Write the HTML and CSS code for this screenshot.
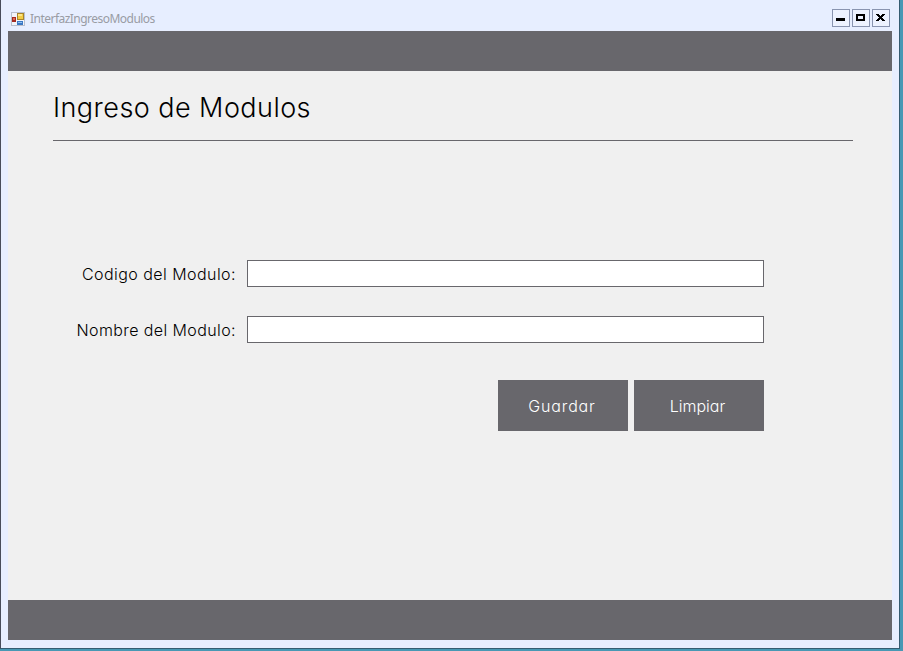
FILE: index.html
```html
<!DOCTYPE html>
<html lang="es">
<head>
<meta charset="utf-8">
<title>InterfazIngresoModulos</title>
<link rel="stylesheet" href="styles.css">
</head>
<body>
<div class="window">
  <header class="titlebar">
    <svg class="app-icon" width="14" height="14" viewBox="0 0 14 14" shape-rendering="crispEdges">
      <rect x=".5" y=".5" width="13" height="13" fill="#f2f4fa" stroke="#b9bfcd"/>
      <rect x="1" y="5" width="4" height="5" fill="#a52a22"/>
      <rect x="2" y="6" width="2" height="2" fill="#e06a50"/>
      <rect x="6" y="1" width="7" height="7" fill="#a8842a"/>
      <rect x="7" y="2" width="5" height="5" fill="#f3cd45"/>
      <rect x="7" y="2" width="4" height="2" fill="#fbe58a"/>
      <rect x="6" y="9" width="6" height="4" fill="#3b78c4"/>
      <rect x="7" y="10" width="4" height="1" fill="#8fc0f0"/>
    </svg>
    <span class="caption">InterfazIngresoModulos</span>
    <div class="controls">
      <button class="control" type="button" aria-label="Minimizar"><svg width="16" height="16" viewBox="0 0 16 16" shape-rendering="crispEdges"><path d="M3 8h9v3H3z"/></svg></button>
      <button class="control" type="button" aria-label="Maximizar"><svg width="16" height="16" viewBox="0 0 16 16" shape-rendering="crispEdges"><path fill-rule="evenodd" d="M3 4h9v7H3zM5 6v3h5V6z"/></svg></button>
      <button class="control" type="button" aria-label="Cerrar"><svg width="16" height="16" viewBox="0 0 16 16" shape-rendering="crispEdges"><path d="M3 4h3v1h1v1h1V5h1V4h3v1h-1v1h-1v1H9v1h1v1h1v1h1v1H9v-1H8V9H7v1H6v1H3v-1h1V9h1V8h1V7H5V6H4V5H3z"/></svg></button>
    </div>
  </header>
  <div class="form">
    <div class="band"></div>
    <main class="content">
      <h1 class="heading"><span>Ingreso de Modulos</span></h1>
      <div class="fields">
        <label class="label code" for="codigo">Codigo del Modulo:</label>
        <input class="input" id="codigo" type="text">
        <label class="label name" for="nombre">Nombre del Modulo:</label>
        <input class="input" id="nombre" type="text">
      </div>
      <div class="actions">
        <button class="action save" type="button">Guardar</button>
        <button class="action clear" type="button">Limpiar</button>
      </div>
    </main>
    <div class="band"></div>
  </div>
</div>
</body>
</html>
```
FILE: styles.css
```css
* { box-sizing: border-box; }
body {
  margin: 0;
  width: 903px;
  height: 651px;
  overflow: hidden;
  background: #4798b4;
}
.window {
  width: 900px;
  height: 649px;
  border: 1px solid #355c72;
  border-top: 0;
  border-left-color: #484c5a;
  padding: 0 7px 8px;
  background: #e7eeff;
}
.titlebar {
  display: flex;
  height: 31px;
  padding: 6px 2px 0 3px;
  align-items: center;
}
.caption {
  margin-left: 5px;
  font: 12px/16px "Noto Sans", "Open Sans", sans-serif;
  letter-spacing: -0.53px;
  color: #999ca4;
}
.controls { display: flex; gap: 2px; margin-left: auto; margin-top: -2px; }
.control {
  width: 18px;
  height: 18px;
  padding: 0;
  border: 1px solid #8994b0;
  background: #edf2ff;
}
.control svg { display: block; }
.form {
  display: flex;
  flex-direction: column;
  height: 609px;
  background: #f0f0f0;
}
.band { height: 40px; background: #68676c; }
.content {
  flex: 1;
  padding: 0 39px 0 45px;
  font-family: Inter, Lato, sans-serif;
  font-feature-settings: "cv11" 1;
}
.heading {
  height: 70px;
  margin: 0;
  padding-top: 19px;
  border-bottom: 1px solid #68676c;
  font-size: 27px;
  font-weight: 300;
  line-height: 36px;
  letter-spacing: 0.45px;
  color: #000;
}
.fields {
  display: grid;
  grid-template-columns: 183px 517px;
  grid-auto-rows: 27px;
  column-gap: 11px;
  row-gap: 29px;
  margin-top: 119px;
  align-items: center;
}
.label {
  justify-self: end;
  font-size: 16px;
  font-weight: 300;
  line-height: 24px;
  white-space: nowrap;
  color: #000;
}
.code { letter-spacing: 0.45px; }
.name { letter-spacing: 0.4px; }
.input {
  width: 517px;
  height: 27px;
  border: 1px solid #68676c;
  border-radius: 0;
  background: #fff;
}
.actions {
  display: flex;
  gap: 6px;
  margin: 37px 0 0 445px;
}
.action {
  width: 130px;
  height: 51px;
  padding: 1px 0 0;
  border: 0;
  background: #68676c;
  color: #fff;
  font: 300 16px/24px Inter, Lato, sans-serif;
  font-feature-settings: "cv11" 1;
}
.save { letter-spacing: 0.85px; padding-right: 2px; }
.clear { padding-right: 3px; }
```
